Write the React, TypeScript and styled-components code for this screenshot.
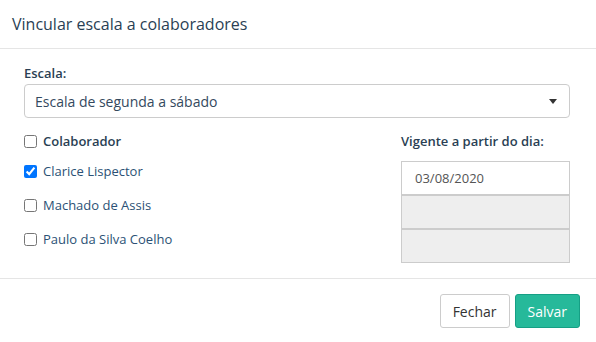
import React, { useState } from "react";
import styled, { createGlobalStyle } from "styled-components";

const GlobalStyle = createGlobalStyle`
  html, body {
    margin: 0;
    padding: 0;
    background: #fff;
    font-family: "Open Sans", "Liberation Sans", sans-serif;
  }
`;

const Modal = styled.div`
  width: 596px;
  height: 342px;
  display: flex;
  flex-direction: column;
  background: #fff;
  color: #2a3f54;
`;

const Header = styled.div`
  height: 49px;
  display: flex;
  align-items: center;
  padding: 0 12px;
  border-bottom: 1px solid #e5e5e5;
`;

const Title = styled.h4`
  margin: 0;
  font-size: 16px;
  font-weight: 400;
  color: #2a3f54;
`;

const Body = styled.div`
  padding: 15px 26px 15px 24px;
  border-bottom: 1px solid #e5e5e5;
`;

const Label = styled.div<{ gap?: number }>`
  font-size: 13px;
  font-weight: 600;
  line-height: 18px;
  color: #2a3f54;
  margin-bottom: ${(p) => p.gap ?? 2}px;
`;

const SelectBox = styled.div`
  height: 32px;
  border: 1px solid #ccc;
  border-radius: 4px;
  display: flex;
  align-items: center;
  justify-content: space-between;
  padding: 0 12px 0 10px;
  font-size: 14px;
  color: #34495e;
`;

const Caret = styled.span`
  width: 0;
  height: 0;
  border-left: 4px solid transparent;
  border-right: 4px solid transparent;
  border-top: 5px solid #333;
`;

const Columns = styled.div`
  display: flex;
  margin-top: 14px;
`;

const LeftCol = styled.div`
  flex: 1;
`;

const RightCol = styled.div`
  width: 169px;
`;

const CheckRow = styled.label<{ head?: boolean }>`
  display: flex;
  align-items: center;
  gap: 6px;
  height: ${(p) => (p.head ? 18 : 34)}px;
  margin-bottom: ${(p) => (p.head ? 4 : 0)}px;
  font-size: 13px;
  font-weight: ${(p) => (p.head ? 600 : 400)};
  color: ${(p) => (p.head ? "#2a3f54" : "#2b5175")};
  cursor: pointer;

  input {
    margin: 0;
    width: 13px;
    height: 13px;
  }
`;

const DateBox = styled.div<{ disabled?: boolean }>`
  height: 32px;
  border: 1px solid #ccc;
  background: ${(p) => (p.disabled ? "#eee" : "#fff")};
  display: flex;
  align-items: center;
  padding: 0 13px;
  font-size: 13px;
  color: #555;
`;

const Footer = styled.div`
  display: flex;
  justify-content: flex-end;
  gap: 5px;
  padding: 15px 16px 14px;
`;

const Button = styled.button<{ primary?: boolean }>`
  height: 34px;
  padding: 0 12px;
  font-family: "Open Sans", "Liberation Sans", sans-serif;
  font-size: 14px;
  border-radius: 3px;
  border: 1px solid ${(p) => (p.primary ? "#169f85" : "#ccc")};
  background: ${(p) => (p.primary ? "#26b99a" : "#fff")};
  color: ${(p) => (p.primary ? "#fff" : "#333")};
  cursor: pointer;
`;

const people = [
  { name: "Clarice Lispector", checked: true, date: "03/08/2020" },
  { name: "Machado de Assis", checked: false, date: "" },
  { name: "Paulo da Silva Coelho", checked: false, date: "" },
];

const App: React.FC = () => {
  const [checks, setChecks] = useState(people.map((p) => p.checked));

  return (
    <Modal>
      <GlobalStyle />
      <Header>
        <Title>Vincular escala a colaboradores</Title>
      </Header>
      <Body>
        <Label>Escala:</Label>
        <SelectBox>
          <span>Escala de segunda a sábado</span>
          <Caret />
        </SelectBox>
        <Columns>
          <LeftCol>
            <CheckRow head>
              <input type="checkbox" />
              Colaborador
            </CheckRow>
            {people.map((p, i) => (
              <CheckRow key={p.name}>
                <input
                  type="checkbox"
                  checked={checks[i]}
                  onChange={() =>
                    setChecks(checks.map((c, j) => (j === i ? !c : c)))
                  }
                />
                {p.name}
              </CheckRow>
            ))}
          </LeftCol>
          <RightCol>
            <Label gap={11}>Vigente a partir do dia:</Label>
            {people.map((p) => (
              <DateBox key={p.name} disabled={!p.date}>
                {p.date}
              </DateBox>
            ))}
          </RightCol>
        </Columns>
      </Body>
      <Footer>
        <Button>Fechar</Button>
        <Button primary>Salvar</Button>
      </Footer>
    </Modal>
  );
};

export default App;
